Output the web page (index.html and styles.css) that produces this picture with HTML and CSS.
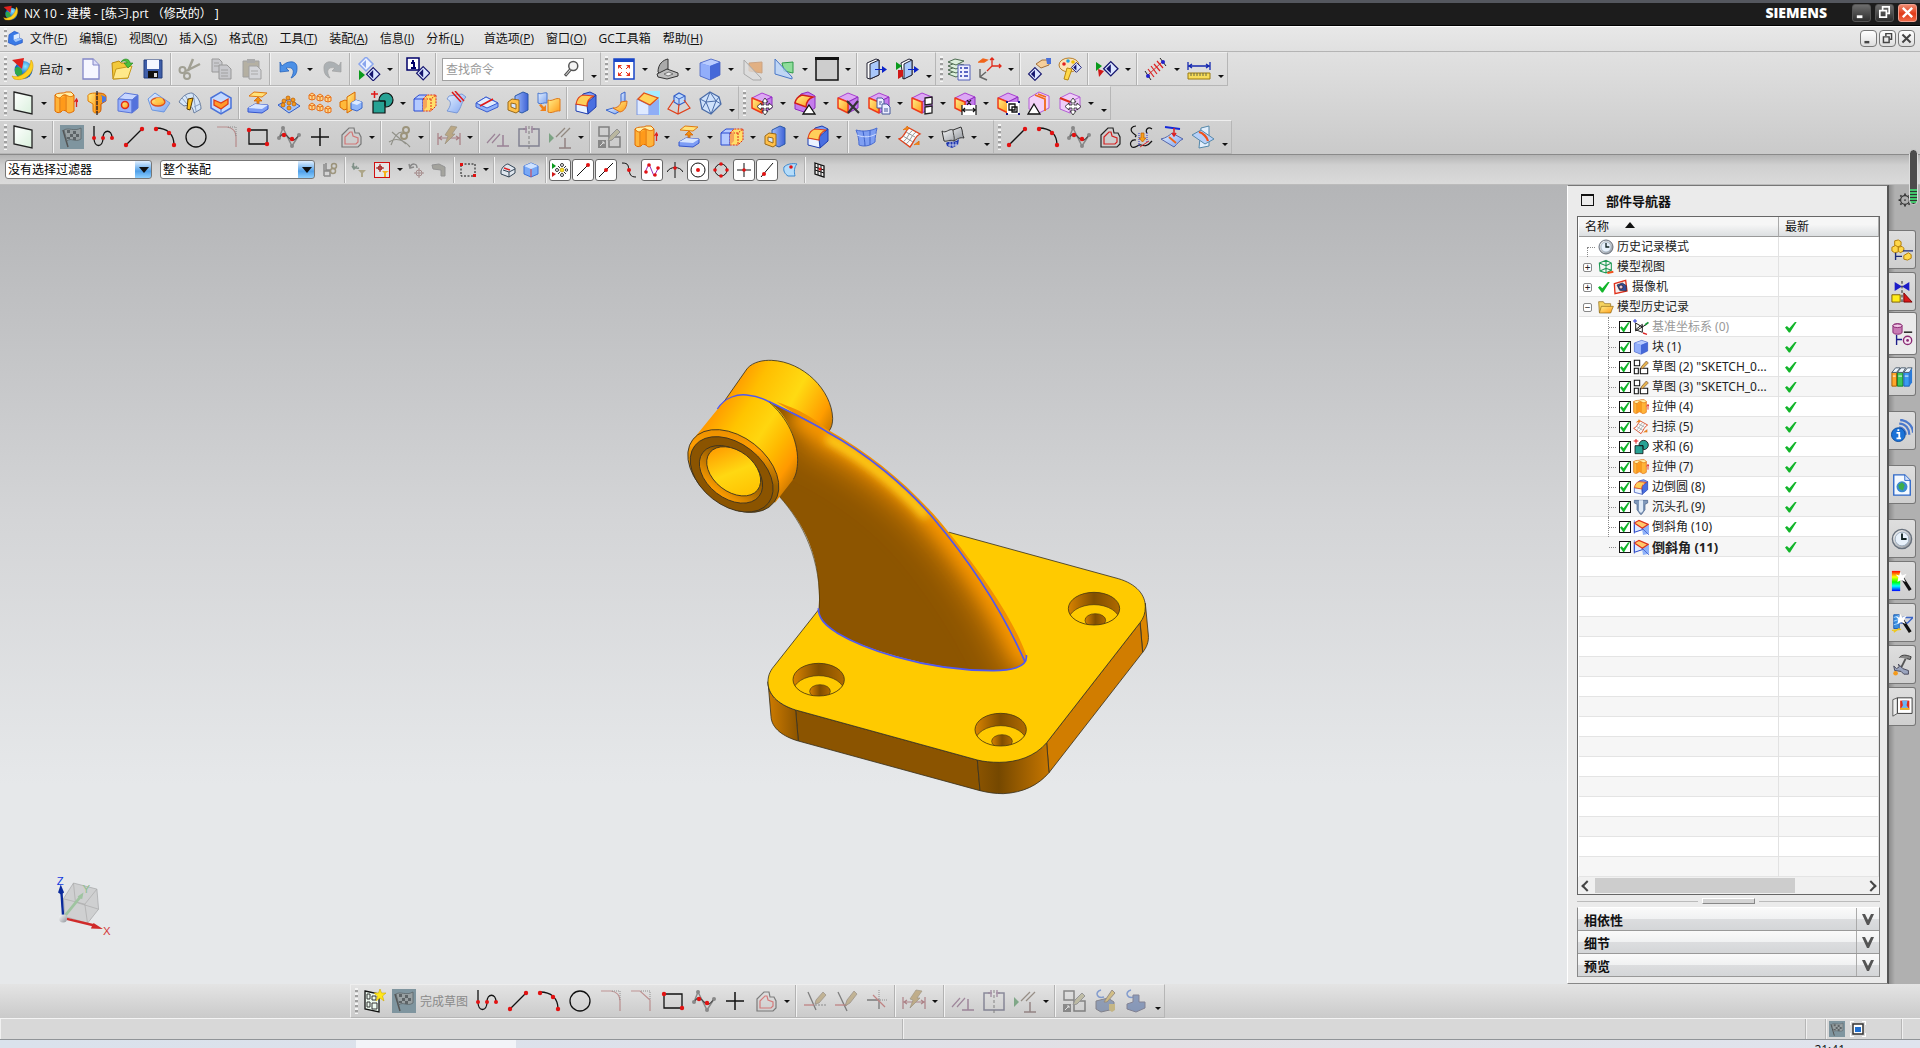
FILE: index.html
```html
<!DOCTYPE html>
<html lang="zh-CN">
<head>
    <meta charset="utf-8">
    <title>NX 10 - 建模 - [练习.prt （修改的） ]</title>
    <link rel="stylesheet" href="styles.css">
</head>
<body>
    <!-- icon library -->
    <svg class="library" aria-hidden="true">
        <defs>
            <linearGradient id="blue" x1="0" y1="0" x2="1" y2="1"><stop offset="0" stop-color="#e4f0ff"/><stop offset="1" stop-color="#7fa4f0"/></linearGradient>
            <linearGradient id="deep" x1="0" y1="0" x2="1" y2="0"><stop offset="0" stop-color="#9fbcfa"/><stop offset="1" stop-color="#3e62d6"/></linearGradient>
            <linearGradient id="gold" x1="0" y1="0" x2="1" y2="1"><stop offset="0" stop-color="#fff08a"/><stop offset="1" stop-color="#ff9a1a"/></linearGradient>
            <linearGradient id="mint" x1="0" y1="0" x2="1" y2="1"><stop offset="0" stop-color="#ffffff"/><stop offset="1" stop-color="#d9f0dc"/></linearGradient>
            <linearGradient id="steel" x1="0" y1="0" x2="1" y2="1"><stop offset="0" stop-color="#ffffff"/><stop offset="1" stop-color="#8d9299"/></linearGradient>
            <linearGradient id="rainbow" x1="0" y1="0" x2="0" y2="1"><stop offset="0" stop-color="#f00"/><stop offset=".3" stop-color="#ff0"/><stop offset=".55" stop-color="#0f0"/><stop offset=".75" stop-color="#0ff"/><stop offset="1" stop-color="#00f"/></linearGradient>
            <radialGradient id="globe" cx=".6" cy=".3"><stop offset="0" stop-color="#8fe8ff"/><stop offset="1" stop-color="#0a62c8"/></radialGradient>
            <g id="pcube" stroke-linejoin="round">
                <path d="M2 7 12 2 22 6 12 11Z" fill="#dca8f4" stroke="#a93fd0"/>
                <path d="M12 11 22 6V17L12 22Z" fill="#c47cec" stroke="#8e2cc0"/>
                <path d="M2 7 12 11V22L2 17Z" fill="url(#gold)" stroke="#ee3a1a" stroke-width="1.500"/>
            </g>
            <g id="move4">
                <path d="M15 7 18 11H16V14H19V12L23 15.500 19 19V17H16V20H18L15 24 12 20H14V17H11V19L7 15.500 11 12V14H14V11H12Z" fill="#fff" stroke="#222" stroke-width=".8"/>
            </g>
            <g id="diamond"><path d="M12 1 23 12 12 23 1 12Z" fill="#dce6ff" stroke="#14146e" stroke-width="2"/><path d="M12 5V19L5 12Z" fill="#14146e"/></g>
            <g id="wand"><path d="M12 8 21 22" stroke="#111" stroke-width="3.500"/><path d="M10 2 12 6 17 4 14 9 16 13 11 11 7 13 8 8 5 5 9 6Z" fill="#fff"/></g>
        </defs>

        <symbol id="nx" viewBox="0 0 24 24"><circle cx="12.500" cy="13" r="9" fill="url(#globe)"/><path d="M4 11C8 8 12 12 11 17 9 21 6 19 4 16Z" fill="#2fa84a"/><path d="M1 19C8 22 19 15 20 3 26 10 18 26 3 22Z" fill="#ffd21f" stroke="#d99a00" stroke-width=".6"/><path d="M1 3 13 1 11 12Z" fill="#e0201c"/></symbol>
        <symbol id="part" viewBox="0 0 24 24"><path d="M3 7 11 2 18 5V12L23 14V19L12 23 2 19Z" fill="#3a7ae6" stroke="#1b4fc0"/><path d="M10 8 18 5V12L10 15Z" fill="#dcebff"/><path d="M10 15 18 12 23 14 13 18Z" fill="#a4c8fa"/></symbol>
        <symbol id="new" viewBox="0 0 24 24"><path d="M4 2H14L20 8V22H4Z" fill="#f6f6ff" stroke="#8286c8" stroke-width="1.300"/><path d="M14 2V8H20" fill="#dcdcf8" stroke="#8286c8"/></symbol>
        <symbol id="open" viewBox="0 0 24 24"><path d="M2 6 9 4 11 6H18V21L3 22Z" fill="#f3c93a" stroke="#b98a10"/><path d="M6 12 22 9 18 21 3 22Z" fill="#ffe98a" stroke="#c79a1a"/><path d="M11 5C14 0 20 2 20 6H23L18 11 14 6H17C17 4 14 3 11 5Z" fill="#4cbf3c" stroke="#20801c" stroke-width=".6"/></symbol>
        <symbol id="save" viewBox="0 0 24 24"><path d="M3 3H21V21H3Z" fill="#3f5ea8" stroke="#223c7c"/><path d="M6 3H18V12H6Z" fill="#f6f8ff"/><path d="M7 14H17V21H7Z" fill="#111"/><path d="M13 16H16V20H13Z" fill="#ddd"/></symbol>
        <symbol id="cut" viewBox="0 0 24 24"><path d="M15 2 10 14M22 7 8 14" stroke="#66644c" stroke-width="2.500"/><g fill="none" stroke="#66644c" stroke-width="2"><circle cx="4.500" cy="13" r="3"/><circle cx="9" cy="19" r="3"/></g></symbol>
        <symbol id="copy" viewBox="0 0 24 24"><g fill="#b4b5bd" stroke="#555"><path d="M3 2H10L13 5V15H3Z"/><path d="M10 8H18L22 12V22H10Z"/></g><path d="M5 6H10M5 9H10M12 13H19M12 16H19M12 19H19" stroke="#666"/></symbol>
        <symbol id="paste" viewBox="0 0 24 24"><path d="M3 4H19V20H3Z" fill="#8d8468" stroke="#666"/><path d="M7 2H15V6H7Z" fill="#777"/><path d="M9 9H17L21 13V22H9Z" fill="#ccced6" stroke="#666"/><path d="M11 14H18M11 17H18" stroke="#777"/></symbol>
        <symbol id="undo" viewBox="0 0 24 24"><path d="M3 5 5 9C11 3 21 3 20 12 20 17 17 20 14 21 18 15 17 9 9 11L12 14 3 15Z" fill="#4c90e6" stroke="#1d5cb8" stroke-width=".7"/></symbol>
        <symbol id="redo" viewBox="0 0 24 24"><path d="M21 5 19 9C13 3 3 3 4 12 4 17 7 20 10 21 6 15 7 9 15 11L12 14 21 15Z" fill="#7a848a" stroke="#666" stroke-width=".7"/></symbol>
        <symbol id="repeat" viewBox="0 0 24 24"><path d="M9 0 16 7 9 14 2 7Z" fill="#edf3ff" stroke="#8aa6ee" stroke-width="1.500"/><path d="M9 3V11L5 7Z" fill="#8aa6ee"/><path d="M2 13 8 18 2 23Z" fill="#0a9a1c"/><g transform="translate(9 10) scale(.6)"><use href="#diamond"/></g></symbol>
        <symbol id="info" viewBox="0 0 24 24"><path d="M1 1H13V13H1Z" fill="#fff" stroke="#00006a" stroke-width="1.500"/><path d="M7 3V5M5 6H8V11M5 11H10" stroke="#00006a" stroke-width="2" fill="none"/><g transform="translate(10 9) scale(.6)"><use href="#diamond"/></g></symbol>
        <symbol id="search" viewBox="0 0 24 24"><circle cx="15" cy="8" r="6" fill="#f4f4f4" stroke="#555" stroke-width="2"/><path d="M11 13 4 21" stroke="#555" stroke-width="4"/><path d="M11 13 5 20" stroke="#eee" stroke-width="1.300"/></symbol>
        <symbol id="fit" viewBox="0 0 24 24"><path d="M2 2H22V22H2Z" fill="#fff" stroke="#1846c8" stroke-width="1.500"/><path d="M2 2H22V5H2Z" fill="#1846c8"/><path d="M6 8H10L6 12ZM18 8V12L14 8ZM6 19V15L10 19ZM18 19H14L18 15Z" fill="#e8321a"/><path d="M7 9 10 12M17 9 14 12M7 18 10 15M17 18 14 15" stroke="#e8321a"/></symbol>
        <symbol id="orient" viewBox="0 0 24 24"><path d="M3 15C3 7 8 3 13 2V12L5 17Z" fill="#aaa" stroke="#333"/><path d="M2 17 12 12 23 16V19L12 22 3 20Z" fill="#bdbdbd" stroke="#333"/><path d="M9 17 14 15 18 17 13 19Z" fill="#eee" stroke="#555" stroke-width=".7"/></symbol>
        <symbol id="cube" viewBox="0 0 24 24"><path d="M2 6 13 2 22 5V18L12 23 2 19Z" fill="#5c80ea"/><path d="M2 6 13 2 22 5 12 9Z" fill="#b9ccff"/><path d="M2 6 12 9V23L2 19Z" fill="#92aefa"/><path d="M12 9 22 5V18L12 23Z" fill="#4568d8"/><path d="M2 6 13 2 22 5V18L12 23 2 19Z" fill="none" stroke="#4a63c0" stroke-width=".8"/></symbol>
        <symbol id="clip" viewBox="0 0 24 24"><path d="M8 6 21 5V16L8 14Z" fill="#e6842a" stroke="#b96b2a"/><path d="M3 3 20 21V23H12L3 17Z" fill="#ddd" fill-opacity=".7" stroke="#777"/></symbol>
        <symbol id="clip2" viewBox="0 0 24 24"><path d="M10 6 21 5V16L12 14Z" fill="#8fdd9a" stroke="#2f9a48"/><path d="M3 2 20 20V22L3 17Z" fill="#b9d4fa" fill-opacity=".8" stroke="#4a78c8"/></symbol>
        <symbol id="swatch" viewBox="0 0 24 24"><path d="M1 1H23V23H1Z" fill="#cdcdcd" stroke="#111" stroke-width="1.500"/><path d="M0 0H24V3H0Z" fill="#111"/></symbol>
        <symbol id="door" viewBox="0 0 24 24"><path d="M3 6 12 2 15 3V18L6 22 3 21Z" fill="#fff" stroke="#223"/><path d="M6 7 15 3V18L6 22Z" fill="#a9c8fa" stroke="#223"/><path d="M11 12H18V9L23 12.500 18 16V13H11Z" fill="#0a22c8"/></symbol>
        <symbol id="doorrun" viewBox="0 0 24 24"><path d="M6 6 14 2 17 3V18L8 22Z" fill="#fff" stroke="#223"/><path d="M9 7 17 3V18L9 22Z" fill="#a9c8fa" stroke="#223"/><path d="M13 12H19V9L24 12.500 19 16V13H13Z" fill="#0a22c8"/><path d="M1 5 7 9 1 13Z" fill="#0a9a1c"/><path d="M3 13H8V19L3 22Z" fill="#d01818"/></symbol>
        <symbol id="layers" viewBox="0 0 24 24"><g fill="#dcefdc" stroke="#4c6a50"><path d="M1 17 8 14 17 16 9 20Z"/><path d="M1 13 8 10 17 12 9 16Z"/><path d="M1 9 8 6 17 8 9 12Z"/><path d="M1 5 8 2 17 4 9 8Z"/></g><path d="M11 8H23V23H11Z" fill="#eef" stroke="#5560b8"/><path d="M13 11H15M13 15H15M13 19H15M17 11H21M17 15H21M17 19H21" stroke="#2a38b0" stroke-width="1.500"/></symbol>
        <symbol id="csys" viewBox="0 0 24 24"><path d="M14 1V9M14 9H23M14 9 9 14M12 3 14 1 16 3M21 7 23 9 21 11" stroke="#e02a1a" fill="none" stroke-width="1.300"/><path d="M1 5 5 2 9 3 6 5Z" fill="#f0641a" stroke="#f0641a" stroke-width="1.500"/><path d="M2 12V20L9 23M2 20 8 15" stroke="#666" fill="none" stroke-width="1.500"/></symbol>
        <symbol id="handview" viewBox="0 0 24 24"><path d="M9 7 15 3H22V8L14 11Z" fill="#f5cf9c" stroke="#a3703a"/><path d="M19 1H24V7H20Z" fill="#4a70d8"/><g transform="translate(1 10) scale(.58)"><use href="#diamond"/></g></symbol>
        <symbol id="palette" viewBox="0 0 24 24"><ellipse cx="11" cy="8" rx="10" ry="7" fill="#fbe3b8" stroke="#b8802c"/><circle cx="6" cy="7" r="1.800" fill="#e02020"/><circle cx="10" cy="4" r="1.800" fill="#22a0e0"/><circle cx="15" cy="5" r="1.800" fill="#f0c000"/><path d="M9 11 14 12 10 23 6 22Z" fill="#ffd84a" stroke="#b98a10"/><g transform="translate(13 5) scale(.45)"><use href="#diamond"/></g></symbol>
        <symbol id="showhide" viewBox="0 0 24 24"><path d="M1 5 7 9 1 14Z" fill="#0a9a1c"/><path d="M3 12 9 14 4 20Z" fill="#d01818"/><g transform="translate(8 4) scale(.65)"><use href="#diamond"/></g></symbol>
        <symbol id="distance" viewBox="0 0 24 24"><path d="M4 18 18 5" stroke="#c33"/><path d="M4 12 10 20M7 9 13 17M10 7 16 14M13 4 19 11" stroke="#d22" stroke-width="1.200"/><path d="M1 14 7 23M16 1 22 9" stroke="#222"/><circle cx="4" cy="19" r="2" fill="#22c"/><circle cx="19" cy="5" r="2" fill="#22c"/></symbol>
        <symbol id="ruler" viewBox="0 0 24 24"><path d="M1 5V13M23 5V13M2 9H22M5 7 2 9 5 11M19 7 22 9 19 11" stroke="#1428b0" stroke-width="1.300" fill="none"/><path d="M1 16H23V22H1Z" fill="#f7dc5a" stroke="#9a7a10"/><path d="M4 16V19M7 16V19M10 16V19M13 16V19M16 16V19M19 16V19" stroke="#664"/></symbol>

        <symbol id="plane" viewBox="0 0 24 24"><path d="M3 1 21 5V23L3 19Z" fill="url(#mint)" stroke="#222" stroke-width="1.300"/></symbol>
        <symbol id="extrude" viewBox="0 0 24 24"><path d="M1 4V20C3 22 5 22 7 21L9 19 12 20C14 23 17 22 20 20V4Z" fill="#ffb43a" stroke="#e06a00"/><path d="M1 4C4 1 9 3 12 1L17 1 20 4C17 7 14 5 12 4 9 3 7 6 6 7 4 7 2 6 1 4Z" fill="#fff0a8" stroke="#e06a00"/><path d="M6 7V21M12 5V20" stroke="#e06a00"/><path d="M7 7 11 5V19L7 20Z" fill="#ff9a1a"/><path d="M22.500 16V9M20.500 11 22.500 8 24 11" stroke="#d22" stroke-width="1.300" fill="none"/></symbol>
        <symbol id="revolve" viewBox="0 0 24 24"><path d="M3 6C2 3 6 2 11 2V22C8 22 8 20 8 18V13L3 10Z" fill="url(#gold)" stroke="#e07a00"/><path d="M12 2C18 2 21 3 21 6V10L16 13V18C16 21 14 22 12 22Z" fill="#f59a1a" stroke="#d05a00"/><path d="M16 4 21 6V10L17 12V6Z" fill="#4a78e0"/><path d="M12 0V24" stroke="#222" stroke-width="1.300" stroke-dasharray="4 1"/></symbol>
        <symbol id="block" viewBox="0 0 24 24"><path d="M2 8 9 2 22 4 16 9Z" fill="#c8d6ff" stroke="#5a76d8"/><path d="M2 8 16 9V22L2 20Z" fill="#9ab2fa" stroke="#5a76d8"/><path d="M16 9 22 4V17L16 22Z" fill="#5472dc" stroke="#5a76d8"/><circle cx="9" cy="14" r="3.500" fill="url(#gold)" stroke="#e02a1a" stroke-width="1.500"/></symbol>
        <symbol id="emboss" viewBox="0 0 24 24"><path d="M1 8 8 2 23 12 17 21 5 19Z" fill="url(#blue)" stroke="#6a96e0"/><ellipse cx="11" cy="11" rx="7" ry="4" fill="url(#gold)" stroke="#e0501a" stroke-width="1.300"/><ellipse cx="12" cy="9" rx="4" ry="2.500" fill="#ffc94a"/></symbol>
        <symbol id="sweep" viewBox="0 0 24 24"><path d="M1 11C5 4 10 2 14 2 20 5 23 12 23 18L16 22C15 16 12 13 6 15Z" fill="#d6e6f8" stroke="#6a7ea0"/><path d="M7 4 12 12M15 2 18 20M9 13 4 7M16 16 22 13" stroke="#8a9ebe"/><path d="M10 8 15 7 12 19 9 18Z" fill="#ffc21a" stroke="#5a3a00"/></symbol>
        <symbol id="shell" viewBox="0 0 24 24"><path d="M2 7 12 1 22 7V17L12 23 2 17Z" fill="#c4daff" stroke="#4a72d8" stroke-width="1.500"/><path d="M5 9 12 12 19 8V13L12 18 5 14Z" fill="#ff9a2a" stroke="#e03a1a" stroke-width="1.300"/><path d="M12 18V22" stroke="#4a72d8"/></symbol>
        <symbol id="pad" viewBox="0 0 24 24"><path d="M3 5 8 1 21 2 16 6Z" fill="#ffe27a" stroke="#e07a10"/><path d="M12 6 16 10H13V14H11V10H8Z" fill="#f09010" stroke="#d05a00" stroke-width=".7"/><path d="M2 17 9 13 22 14V18L16 22 2 21Z" fill="#7d9df5" stroke="#3556cc"/><path d="M2 17 9 13 22 14 16 18Z" fill="#d9e6ff"/></symbol>
        <symbol id="bumps" viewBox="0 0 24 24"><path d="M1 14 12 8 23 15 12 22Z" fill="#a4c4f8" stroke="#2f5cc8"/><g fill="#f79a1a" stroke="#b85c00" stroke-width=".7"><circle cx="11" cy="7" r="2"/><circle cx="16" cy="9" r="2"/><circle cx="7" cy="10" r="2"/><circle cx="12" cy="12" r="2"/><circle cx="17" cy="13" r="2"/><circle cx="6" cy="14" r="2"/><circle cx="12" cy="17" r="2"/></g></symbol>
        <symbol id="array" viewBox="0 0 24 24"><g fill="#ffd88a" stroke="#e8701a"><path d="M1 4 4 2 7 4V8L4 9 1 8Z"/><path d="M9 5 12 3 15 5V9L12 10 9 9Z"/><path d="M17 6 20 4 23 6V10L20 11 17 10Z"/><path d="M1 14 4 12 7 14V18L4 19 1 18Z"/><path d="M9 15 12 13 15 15V19L12 20 9 19Z"/><path d="M17 17 20 15 23 17V21L20 22 17 21Z"/><path d="M1 4 4 5V9M4 5 7 4M9 5 12 6V10M12 6 15 5M17 6 20 7V11M20 7 23 6M1 14 4 15V19M4 15 7 14M9 15 12 16V20M12 16 15 15M17 17 20 18V22M20 18 23 17" fill="none"/></g></symbol>
        <symbol id="mirror" viewBox="0 0 24 24"><path d="M1 11 6 9 11 11V17L5 19 1 16Z" fill="#ffb93a" stroke="#d86a00"/><path d="M8 6 16 1V17L8 22Z" fill="url(#gold)" stroke="#d86a00"/><path d="M12 12 17 9 23 11V17L18 20 12 18Z" fill="#8fb6f8" stroke="#3a66cc"/><path d="M12 12 17 9 23 11 18 14Z" fill="#dcebff"/></symbol>
        <symbol id="unite" viewBox="0 0 24 24"><path d="M1 3H8M4.500 0V7" stroke="#e01818" stroke-width="1.500"/><circle cx="16" cy="9" r="7" fill="#27a294" stroke="#111" stroke-width="1.200"/><path d="M3 10H15V22H3Z" fill="#27a294" stroke="#111" stroke-width="1.200"/><path d="M10 10H15V15" fill="none" stroke="#111"/></symbol>
        <symbol id="trim" viewBox="0 0 24 24"><path d="M1 8 6 4H14V16L10 20H1Z" fill="#b4caff" stroke="#2a4ad0"/><path d="M10 8 14 4H23V15L18 20H10Z" fill="#ffdf6a" stroke="#e02a1a" stroke-dasharray="2 1"/><path d="M18 8V20M10 8H18L23 4" fill="none" stroke="#e02a1a" stroke-dasharray="2 1"/><path d="M1 8H10V20" fill="none" stroke="#2a4ad0"/><path d="M10 9C12 9 13 7 14 5V16L10 20Z" fill="#f7a45a"/></symbol>
        <symbol id="tsheet" viewBox="0 0 24 24"><path d="M5 5 18 3 22 6C17 11 18 16 13 22L3 20C7 15 8 10 3 8Z" fill="url(#blue)" stroke="#6a8cd0" stroke-width=".8"/><path d="M8 1 17 11M11 0 20 10" stroke="#e01818" stroke-width="1.500"/></symbol>
        <symbol id="split" viewBox="0 0 24 24"><path d="M1 12 11 6 23 12V16L12 21 1 16Z" fill="#8fb0f8" stroke="#3a5cd0"/><path d="M1 12 11 6 23 12 12 17Z" fill="#e0ecff" stroke="#3a5cd0"/><path d="M5 15 18 8" stroke="#e01818" stroke-width="1.800"/></symbol>
        <symbol id="combine" viewBox="0 0 24 24"><path d="M9 5 17 1 22 3V19L16 22 9 19Z" fill="url(#deep)" stroke="#2a58a8"/><path d="M2 11 6 8 13 9V20L10 22 2 19Z" fill="#ffc04a" stroke="#9a6a1a"/><path d="M5 12 10 13V18L5 16Z" fill="#d5e6ff" stroke="#9a6a1a"/></symbol>
        <symbol id="sew" viewBox="0 0 24 24"><path d="M1 2C4 4 7 1 10 2V12C7 11 4 14 1 12Z" fill="url(#blue)" stroke="#4a78d0"/><path d="M11 9C15 11 19 6 23 8V20C19 19 15 23 11 21Z" fill="url(#gold)" stroke="#e07a1a"/><path d="M2 14 4 13 7 16 9 14V20H3L5 18Z" fill="#f0801a"/></symbol>
        <symbol id="fillet" viewBox="0 0 24 24"><path d="M13 12 22 4V16L14 23Z" fill="#4a6fe0" stroke="#1c3cb0"/><path d="M2 13 13 14 14 23 2 20Z" fill="#eaf2ff" stroke="#1c3cb0"/><path d="M9 3 16 1 22 4 19 6 8 5Z" fill="#7d9df5" stroke="#1c3cb0"/><path d="M2 13C3 8 5 5 9 4L20 5C15 7 13 10 13 15Z" fill="#ffcf5a" stroke="#e0401a" stroke-width="1.200"/></symbol>
        <symbol id="blend" viewBox="0 0 24 24"><path d="M16 3 20 1V12L16 14Z" fill="url(#blue)" stroke="#3a66cc"/><path d="M1 19 8 17 15 20 10 23Z" fill="url(#blue)" stroke="#3a66cc"/><path d="M16 11C15 15 12 17 8 17L15 21C20 20 22 15 22 10Z" fill="url(#gold)" stroke="#e0701a"/></symbol>
        <symbol id="chamfer" viewBox="0 0 24 24"><path d="M9 0H24V24H9Z" fill="#a6ecff"/><path d="M1 8 13 14V24H1Z" fill="#dfeaff" stroke="#7a96e0"/><path d="M13 14 23 8V24H13Z" fill="#8faef6"/><path d="M2 8 8 2 22 7 14 14Z" fill="#ffd45a" stroke="#e0501a" stroke-width="1.300"/></symbol>
        <symbol id="draft" viewBox="0 0 24 24"><path d="M7 5 12 2 18 5V11L12 14 7 11Z" fill="#bcd8fb" stroke="#3560c8" stroke-width="1.200"/><path d="M7 5 12 8 18 5M12 8V14" fill="none" stroke="#3560c8"/><path d="M7 9 1 18 11 23 23 17 17 9M12 13 11 23" fill="none" stroke="#e0401a" stroke-width="1.200"/></symbol>
        <symbol id="gem" viewBox="0 0 24 24"><path d="M12 1 21 6 23 13 13 23 4 18 2 8Z" fill="#cfe2fb" stroke="#4a6ca8" stroke-width="1.200"/><path d="M12 1 8 11 2 8M8 11 18 10 21 6M12 1 18 10 23 13M8 11 4 18M8 11 13 23 18 10" fill="none" stroke="#4a6ca8"/></symbol>

        <symbol id="face-move" viewBox="0 0 24 24"><use href="#pcube"/><use href="#move4"/></symbol>
        <symbol id="face-resize" viewBox="0 0 24 24"><path d="M8 3 15 1 22 5V17L14 22 2 18V11Z" fill="#c47cec" stroke="#8e2cc0"/><path d="M2 12C3 7 6 5 9 4L20 6C15 8 13 11 13 16Z" fill="url(#gold)" stroke="#d0201a" stroke-width="1.500"/><path d="M16 14 22 23H10Z" fill="#fff" stroke="#111" stroke-width="1.300"/></symbol>
        <symbol id="face-delete" viewBox="0 0 24 24"><use href="#pcube"/><path d="M11 10 23 22M22 10 12 22" stroke="#333" stroke-width="2.200"/></symbol>
        <symbol id="face-copy" viewBox="0 0 24 24"><use href="#pcube"/><g fill="#eef" stroke="#44589a"><path d="M10 7H15L17 9V17H10Z"/><path d="M15 13H20L23 16V23H15Z"/></g><path d="M12 11H15M12 13H14M17 18H21M17 20H21" stroke="#44589a"/></symbol>
        <symbol id="face-pattern" viewBox="0 0 24 24"><use href="#pcube"/><g fill="#fff" stroke="#222" stroke-width="1.300"><path d="M15 7 22 6V13L15 14Z"/><path d="M15 16 22 15V22L15 23Z"/></g></symbol>
        <symbol id="face-dim" viewBox="0 0 24 24"><use href="#pcube"/><path d="M9 14H23V24H9Z" fill="#fff"/><path d="M9 14V24M23 14V24M10 19H22M12 17 10 19 12 21M20 17 22 19 20 21M14 9 18 14M18 9 14 14" stroke="#111" stroke-width="1.200" fill="none"/></symbol>
        <symbol id="face-group" viewBox="0 0 24 24"><use href="#pcube"/><path d="M11 11H23V23H11Z" fill="#fff"/><path d="M10 10H12V12H10ZM22 10H24V12H22ZM10 22H12V24H10ZM22 22H24V24H22Z" fill="#14147e"/><path d="M13 13H19V19H13ZM16 16H21V21H16Z" fill="none" stroke="#111" stroke-width="1.300"/></symbol>
        <symbol id="face-shell" viewBox="0 0 24 24"><path d="M2 7 12 1 22 5V17L12 22 2 18Z" fill="#f3d2f8" stroke="#b35cd6"/><path d="M8 4 18 8V20M11 3 19 6" fill="none" stroke="#f06a1a" stroke-width="1.800"/><path d="M7 13 13 23H1Z" fill="#fff" stroke="#111" stroke-width="1.300"/></symbol>
        <symbol id="face-edge" viewBox="0 0 24 24"><path d="M2 7 12 2 22 6V17L12 22 2 18Z" fill="#efcdf8" stroke="#b35cd6"/><path d="M12 11V22M12 11 22 6" stroke="#b35cd6"/><path d="M2 7 12 11" stroke="#e02a1a" stroke-width="2"/><use href="#move4"/></symbol>

        <symbol id="flag" viewBox="0 0 24 24"><path d="M0 0H24V24H0Z" fill="#7f959f"/><path d="M3 5 8 22" stroke="#555" stroke-width="1.500"/><path d="M4 5C9 2 14 7 21 3V14C15 18 11 12 7 16Z" fill="#98a0a2" stroke="#5a6468" stroke-width=".8"/><path d="M7 5H10V8H7ZM13 6H16V9H13ZM10 9H13V12H10ZM16 9H19V12H16ZM13 12H16V15H13ZM7 12H10V14H7Z" fill="#5d6467"/></symbol>
        <symbol id="profile" viewBox="0 0 24 24"><path d="M3 1V13C3 23 12 23 12 13 12 4 21 4 21 13" fill="none" stroke="#111" stroke-width="1.300"/><g fill="#e21212"><circle cx="3" cy="13" r="2"/><circle cx="12" cy="13" r="2"/><circle cx="21" cy="13" r="2"/></g></symbol>
        <symbol id="line" viewBox="0 0 24 24"><path d="M4 20 20 4" stroke="#111" stroke-width="1.300"/><g fill="#e21212"><circle cx="4" cy="20" r="2.200"/><circle cx="20" cy="4" r="2.200"/></g></symbol>
        <symbol id="arc" viewBox="0 0 24 24"><path d="M3 3C14 3 21 9 21 20" fill="none" stroke="#111" stroke-width="1.300"/><g fill="#e21212"><circle cx="3" cy="4" r="2.200"/><circle cx="16" cy="8" r="2.200"/><circle cx="21" cy="20" r="2.200"/></g></symbol>
        <symbol id="circle" viewBox="0 0 24 24"><circle cx="12" cy="12" r="10" fill="none" stroke="#111" stroke-width="1.300"/></symbol>
        <symbol id="corner" viewBox="0 0 24 24"><path d="M2 2H12C18 3 21 7 21 12V22" fill="none" stroke="#a04a4a" stroke-width="1.200"/><path d="M13 2H21V11" fill="none" stroke="#444" stroke-dasharray="1 1"/></symbol>
        <symbol id="bevel" viewBox="0 0 24 24"><path d="M1 2H10L20 11V22" fill="none" stroke="#a04a4a" stroke-width="1.200"/><path d="M11 2H20V10" fill="none" stroke="#444" stroke-dasharray="1 1"/></symbol>
        <symbol id="rect" viewBox="0 0 24 24"><path d="M3 5H21V19H3Z" fill="none" stroke="#111" stroke-width="1.300"/><circle cx="3" cy="5" r="2.200" fill="#e21212"/><circle cx="21" cy="19" r="2.200" fill="#e21212"/></symbol>
        <symbol id="spline" viewBox="0 0 24 24"><path d="M2 13 6 3 15 21 22 10" stroke="#888" fill="none" stroke-width="1.500"/><path d="M2 13C7 6 8 9 12 13S18 15 22 10" fill="none" stroke="#444" stroke-width="1.200"/><g fill="#888"><circle cx="6" cy="3" r="2"/><circle cx="2" cy="13" r="2"/><circle cx="15" cy="21" r="2"/><circle cx="22" cy="10" r="2"/></g><circle cx="7" cy="10" r="2.200" fill="#e21212"/><circle cx="15" cy="14" r="2.200" fill="#e21212"/></symbol>
        <symbol id="plus" viewBox="0 0 24 24"><path d="M3 12H21M12 3V21" stroke="#111" stroke-width="1.500"/></symbol>
        <symbol id="offset" viewBox="0 0 24 24"><path d="M3 10 10 3H15L16 8H20L22 12V19L19 22H3Z" fill="none" stroke="#222" stroke-width="1.200"/><path d="M6 12 11 7H13L14 11 19 13V17L17 19H6Z" fill="none" stroke="#d42020" stroke-width="1.200"/></symbol>
        <symbol id="link" viewBox="0 0 24 24"><path d="M3 20C6 12 10 7 14 7M1 17C8 12 16 15 22 22M4 7 18 19" fill="none" stroke="#554" stroke-width="1.200"/><circle cx="16" cy="11" r="3" fill="none" stroke="#6a5a2a" stroke-width="2"/><circle cx="18" cy="5" r="3" fill="none" stroke="#6a5a2a" stroke-width="2"/></symbol>
        <symbol id="dim" viewBox="0 0 24 24"><path d="M1 8V20M23 8V20M2 13H22M5 11 2 13 5 15M19 11 22 13 19 15" fill="none" stroke="#84303a" stroke-width="1.200"/><path d="M14 1 20 2 15 9H18L8 19 11 11 8 10Z" fill="#a5803a" stroke="#665530" stroke-width=".7"/></symbol>
        <symbol id="perp" viewBox="0 0 24 24"><path d="M1 18 9 9M6 18 14 9" stroke="#6a3a62" stroke-width="1.200"/><path d="M17 10V21M11 21H23" stroke="#6a3a62" stroke-width="1.500"/></symbol>
        <symbol id="sym" viewBox="0 0 24 24"><path d="M8 4H2V21H22V4H16" fill="none" stroke="#3a3a5a" stroke-width="1.500"/><path d="M12 1V24" stroke="#333" stroke-dasharray="3 2"/><path d="M9 1V8M15 1V8M6 4H10M14 4H18" stroke="#5a2a5a" stroke-width="1.200"/></symbol>
        <symbol id="auto" viewBox="0 0 24 24"><path d="M1 8 6 13 1 18Z" fill="#2c7a3c"/><path d="M8 12 17 3M13 12 22 3" stroke="#543" stroke-width="1.300"/><path d="M17 13V23M11 23H23" stroke="#5a3a3a" stroke-width="1.500"/></symbol>
        <symbol id="swap" viewBox="0 0 24 24"><path d="M2 2H12V11H2ZM12 12H23V22H12Z" fill="none" stroke="#333" stroke-width="1.500"/><path d="M1 15H9V23H1Z" fill="#444"/><path d="M3 21 7 17M5 17H7V19" stroke="#eee" fill="none"/><path d="M20 4 23 7 15 15 11 16 13 11Z" fill="#a5a072" stroke="#555"/></symbol>
        <symbol id="mesh" viewBox="0 0 24 24"><path d="M1 5C8 7 16 6 22 3 21 8 20 12 20 17 15 21 9 22 4 20 4 15 3 10 1 5Z" fill="#7f9ff2" stroke="#4a6cd0"/><path d="M8 6C9 12 10 17 10 21M15 5C15 11 15 16 15 20" stroke="#3b5fc8" fill="none"/><path d="M2 10C9 13 16 12 21 9" stroke="#cfdcff" fill="none"/></symbol>
        <symbol id="swept" viewBox="0 0 24 24"><path d="M1 14C6 13 7 6 11 3L22 9C17 11 16 17 12 22Z" fill="#fbfbfb" stroke="#e0401a" stroke-width="1.300"/><path d="M5 17C10 14 10 8 15 5M8 19C13 16 13 10 18 7M5 11 15 17M8 7 17 12" stroke="#999" fill="none"/><path d="M5 5 9 2 9 1 11 3 9 5M16 20 20 17 21 16 21 20" fill="#f08a1a" stroke="#e0701a"/></symbol>
        <symbol id="sheet" viewBox="0 0 24 24"><path d="M1 6C5 9 8 3 12 5L20 2C22 6 21 10 23 13 19 12 16 14 13 16 9 14 6 17 3 16Z" fill="url(#steel)" stroke="#333"/><path d="M12 5C12 9 14 12 13 16" stroke="#444" fill="none"/><path d="M5 18C9 15 13 19 18 14L17 20 11 23 6 21Z" fill="#2038b0"/><path d="M9 17V22M12 17V22M15 17V21M7 20H17" stroke="#fff" stroke-width=".7"/></symbol>
        <symbol id="project" viewBox="0 0 24 24"><path d="M7 1C3 1 1 4 3 7S9 10 6 12M23 4C19 1 16 5 18 8M7 15C2 14 0 19 3 22 6 24 9 19 12 20S18 22 23 16" fill="none" stroke="#111" stroke-width="1.200"/><path d="M10 8V21M18 8V18" stroke="#2a2ad0" stroke-dasharray="1 1"/><path d="M12 8H15V13H17L13.500 17 10 13H12Z" fill="#f6a01a" stroke="#c05a00" stroke-width=".7"/><path d="M11 22 20 16" stroke="#d22"/></symbol>
        <symbol id="wrap" viewBox="0 0 24 24"><path d="M1 14C6 13 10 10 12 8L23 14C20 15 17 19 14 22Z" fill="url(#blue)" stroke="#56a"/><path d="M5 2 20 4" stroke="#1428d8" stroke-width="2"/><path d="M14 3V10M12 8 14 11 16 8" stroke="#d22" stroke-width="1.500" fill="none"/><path d="M9 12 16 18" stroke="#f0641a" stroke-width="2"/></symbol>
        <symbol id="cross" viewBox="0 0 24 24"><path d="M10 3 18 1V21L8 23Z" fill="#e2eefc" stroke="#58a"/><path d="M1 10 10 5 23 14 14 19Z" fill="#b6d0f8" stroke="#58a"/><path d="M8 7C12 8 16 12 17 16" stroke="#f0501a" stroke-width="2.200" fill="none"/></symbol>
        <symbol id="sketchnew" viewBox="0 0 24 24"><path d="M3 2 17 5V23L3 20Z" fill="#eefaf0" stroke="#111" stroke-width="1.300"/><path d="M5 5H8V10H5ZM10 7H14V11H10ZM5 13H8V18H5ZM10 14H15V20H10Z" fill="none" stroke="#333"/><path d="M18 0 19.500 4 24 4 20.500 7 22 12 18 9 14 12 15.500 7 12 4 16.500 4Z" fill="#ffe81a" stroke="#d0a800" stroke-width=".6"/></symbol>
        <symbol id="qtrim" viewBox="0 0 24 24"><path d="M5 3 13 21" stroke="#222" stroke-width="1.300"/><path d="M1 16H11" stroke="#a33" stroke-width="1.300"/><path d="M12 16H23" stroke="#444" stroke-dasharray="2 1"/><path d="M20 3 23 6 16 14 12 15 13 11Z" fill="#a88c50" stroke="#543" stroke-width=".7"/></symbol>
        <symbol id="qextend" viewBox="0 0 24 24"><path d="M4 3 13 22" stroke="#222" stroke-width="1.300"/><path d="M1 16H13" stroke="#a33" stroke-width="1.300"/><path d="M20 2 23 5 16 14 11 17 13 11Z" fill="#a88c50" stroke="#543" stroke-width=".7"/></symbol>
        <symbol id="mkcorner" viewBox="0 0 24 24"><path d="M2 11H14V20" stroke="#222" stroke-width="1.300" fill="none"/><path d="M8 6 20 18" stroke="#a33" stroke-width="1.300"/><path d="M14 1V10M15 11H23" stroke="#444" stroke-dasharray="1 1"/></symbol>
        <symbol id="brushes" viewBox="0 0 24 24"><path d="M11 8C4 10 1 3 8 1" fill="none" stroke="#2a5cc0" stroke-width="1.500"/><path d="M3 12 15 9 21 13V20L8 23 3 20Z" fill="#4a6494" stroke="#334"/><path d="M19 1 22 4 14 13H11Z" fill="#c8a030" stroke="#543"/><path d="M16 15H22V21L19 23 16 21Z" fill="#b89a3a"/></symbol>
        <symbol id="stamp" viewBox="0 0 24 24"><path d="M10 8C3 10 0 3 7 1" fill="none" stroke="#2a5cc0" stroke-width="1.500"/><path d="M9 6H15V13H21V19L12 23 3 20V15L9 13Z" fill="#3f5f9e" stroke="#335"/></symbol>

        <symbol id="s-assy" viewBox="0 0 16 16"><path d="M2 2V14M2 9H8V14H2M4 1V8H8" stroke="#444" fill="none" stroke-width="1.500"/><circle cx="12" cy="4" r="2.500" fill="none" stroke="#6a5a2a" stroke-width="1.500"/><circle cx="11" cy="9" r="2.500" fill="none" stroke="#6a5a2a" stroke-width="1.500"/></symbol>
        <symbol id="s-reset" viewBox="0 0 16 16"><path d="M8 6C3 7 1 3 3 1M1 4 3 7 6 4" stroke="#354" fill="none" stroke-width="1.500"/><path d="M7 8H15L12 11V15H10V11Z" fill="#887a40"/></symbol>
        <symbol id="s-snap" viewBox="0 0 16 16"><path d="M0 0H16V16H0Z" fill="#e6e6e6" stroke="#d01010" stroke-width="2"/><path d="M2 6H10M6 2V10" stroke="#a01010"/><circle cx="6" cy="6" r="2" fill="none" stroke="#a01010"/><path d="M8 9H15L12 11V15H10V11Z" fill="#f5b21a"/></symbol>
        <symbol id="s-undo" viewBox="0 0 16 16"><path d="M2 5C4 1 9 1 9 6M1 2 2 6 6 5" stroke="#444" fill="none" stroke-width="1.500"/><circle cx="11" cy="11" r="3" fill="none" stroke="#744"/><path d="M6 11H16M11 6V16" stroke="#744"/></symbol>
        <symbol id="s-tap" viewBox="0 0 16 16"><path d="M1 3 8 2 14 5V14H10V8L2 7Z" fill="#77766a" stroke="#555"/></symbol>
        <symbol id="s-marq" viewBox="0 0 16 16"><path d="M1 2H15V14H1Z" fill="none" stroke="#111" stroke-dasharray="2 1.500"/><path d="M0 1H3V4H0ZM13 12H16V15H13Z" fill="#e01010"/></symbol>
        <symbol id="s-body" viewBox="0 0 16 16"><path d="M1 9C2 5 6 2 8 2L15 6V11L9 15 1 12Z" fill="#dfe6ee" stroke="#345"/><path d="M3 8 9 10 15 7M9 10V15" stroke="#345" fill="none"/><path d="M4 6 10 8" stroke="#d22" stroke-width="1.500"/></symbol>
        <symbol id="s-cube" viewBox="0 0 16 16"><path d="M1 4 8 1 15 4V12L8 15 1 12Z" fill="#78a8f6" stroke="#3a70d8"/><path d="M1 4 8 7 15 4 8 1Z" fill="#cfe2ff"/><path d="M8 7V15" stroke="#e04040"/></symbol>
        <symbol id="s-all" viewBox="0 0 16 16"><path d="M0 1 4 4 0 7Z" fill="#0a9a1c"/><path d="M0 10 4 12 0 15Z" fill="#d01818"/><circle cx="10" cy="8" r="2" fill="#ffe21a" stroke="#a80" stroke-width=".6"/><g fill="none" stroke="#333"><circle cx="10" cy="3" r="1.500"/><circle cx="10" cy="13" r="1.500"/><circle cx="5" cy="8" r="1.500"/><circle cx="14.500" cy="8" r="1.200"/><path d="M6 4 8 6M14 4 12 6M6 12 8 10M14 12 12 10"/></g></symbol>
        <symbol id="s-end" viewBox="0 0 16 16"><path d="M2 14 13 3" stroke="#111"/><circle cx="13" cy="3" r="2" fill="#e21212"/></symbol>
        <symbol id="s-mid" viewBox="0 0 16 16"><path d="M1 15 15 1" stroke="#111"/><circle cx="8" cy="8" r="2" fill="#e21212"/></symbol>
        <symbol id="s-ctrl" viewBox="0 0 16 16"><path d="M1 1C8 1 7 4 8 8S9 15 15 15" fill="none" stroke="#111"/><circle cx="8" cy="8" r="2" fill="#e21212"/></symbol>
        <symbol id="s-pole" viewBox="0 0 16 16"><path d="M1 10 5 2 10 14 15 5" fill="none" stroke="#9a2ab8"/><g fill="#e21212"><circle cx="2" cy="10" r="1.800"/><circle cx="5" cy="3" r="1.800"/><circle cx="11" cy="13" r="1.800"/><circle cx="14" cy="6" r="1.800"/></g></symbol>
        <symbol id="s-inter" viewBox="0 0 16 16"><path d="M8 0V16M0 10C3 4 13 4 16 10" fill="none" stroke="#111"/><circle cx="8" cy="6" r="1.800" fill="#e21212"/></symbol>
        <symbol id="s-center" viewBox="0 0 16 16"><circle cx="8" cy="8" r="7" fill="none" stroke="#111"/><circle cx="8" cy="8" r="2" fill="#e21212"/></symbol>
        <symbol id="s-quad" viewBox="0 0 16 16"><circle cx="8" cy="8" r="6" fill="none" stroke="#111"/><g fill="#e21212"><circle cx="8" cy="2" r="1.800"/><circle cx="8" cy="14" r="1.800"/><circle cx="2" cy="8" r="1.800"/><circle cx="14" cy="8" r="1.800"/></g></symbol>
        <symbol id="s-exist" viewBox="0 0 16 16"><path d="M1 8H15M8 1V15" stroke="#111"/><circle cx="8" cy="8" r="1.800" fill="#e21212"/></symbol>
        <symbol id="s-curve" viewBox="0 0 16 16"><path d="M2 15 14 1" stroke="#111"/><circle cx="5" cy="12" r="2" fill="#e21212"/></symbol>
        <symbol id="s-face" viewBox="0 0 16 16"><path d="M2 5C5 2 10 1 15 2 12 5 12 10 13 14L6 14C3 12 1 9 2 5Z" fill="#b4dcfa" stroke="#3a88d0"/><circle cx="9" cy="5" r="1.800" fill="#e21212"/></symbol>
        <symbol id="s-grid" viewBox="0 0 16 16"><path d="M4 1 13 4V15L4 12Z" fill="#eee" stroke="#111" stroke-width="1.300"/><path d="M7 2V13M10 3V14M4 5 13 8M4 8 13 11" stroke="#111"/><circle cx="9" cy="7" r="1.500" fill="#e21212"/></symbol>

        <symbol id="clock" viewBox="0 0 24 24"><circle cx="12" cy="12" r="10.500" fill="url(#steel)" stroke="#67707c" stroke-width="1.500"/><circle cx="12" cy="12" r="7.500" fill="#e8f1fb" stroke="#9ab"/><path d="M12 6V12H17" stroke="#122" stroke-width="2" fill="none"/></symbol>
        <symbol id="views" viewBox="0 0 24 24"><path d="M2 6 12 2 20 6V17L12 21 3 18ZM2 6 12 10 20 6M12 2V21M3 18 12 14 20 17" fill="none" stroke="#1f9a54" stroke-width="1.600"/><path d="M14 21 23 19" stroke="#f0501a" stroke-width="3"/></symbol>
        <symbol id="camera" viewBox="0 0 24 24"><path d="M2 7 19 2 21 18 3 22Z" fill="#f6eeee" stroke="#e0301a" stroke-width="2"/><path d="M6 9 14 6 20 10V18L10 17Z" fill="#334a9c" stroke="#223"/><circle cx="12" cy="12" r="3" fill="#e8c0d0" stroke="#111"/></symbol>
        <symbol id="folder" viewBox="0 0 24 24"><path d="M1 4H8L10 7H19V20H2Z" fill="#f6d460" stroke="#8a6410"/><path d="M5 11H23L19 21H2Z" fill="url(#gold)" stroke="#8a6410"/></symbol>
        <symbol id="datum" viewBox="0 0 24 24"><path d="M3 0V6M0 3H6" stroke="#2a38d8" stroke-width="1.500"/><path d="M4 6V18L14 12ZM4 16 14 20V8ZM14 12 23 6" fill="none" stroke="#222" stroke-width="1.500"/><path d="M15 21 21 23" stroke="#d22" stroke-width="2"/><path d="M18 9 23 5" stroke="#1a9a3a" stroke-width="2.500"/></symbol>
        <symbol id="sketch" viewBox="0 0 24 24"><path d="M2 2H10V10H2ZM2 14H8V22H2ZM11 14H22V22H11Z" fill="#fff" stroke="#111" stroke-width="1.600"/><path d="M20 3 23 6 15 14 12 15 13 11Z" fill="#e6b44a" stroke="#754"/></symbol>
        <symbol id="hole" viewBox="0 0 24 24"><path d="M2 2H22V6L18 8V16L13 23H11L6 16V8L2 6Z" fill="#7f98ba" stroke="#3f5a85"/><path d="M9 2H15V18L12 21 9 18Z" fill="#dfeaf6"/></symbol>
        <symbol id="t-chamfer" viewBox="0 0 24 24"><path d="M13 12 24 8V22L15 24Z" fill="#8fb2f8"/><path d="M2 8V20L14 16V11" fill="#dfeaff" stroke="#2a48c8" stroke-width="1.500"/><path d="M2 6 9 2 23 8 14 14Z" fill="#ffc86a" stroke="#e0301a" stroke-width="1.800"/><path d="M2 2V22M14 14 24 24" stroke="#2a48c8"/></symbol>
        <symbol id="t-assy" viewBox="0 0 24 24"><g fill="#ffd84a" stroke="#b07800"><path d="M4 2 8 1 11 3V7L7 9 4 7Z"/><path d="M1 9 5 7 8 9V14L4 15 1 13Z"/><path d="M8 9 12 8 14 10V13L10 15 8 13Z"/><path d="M14 18 19 15 22 17V21L18 23 14 22Z"/></g><path d="M13 13H24M5 15V23M5 19H12" stroke="#1b2a78" stroke-width="1.500"/></symbol>
        <symbol id="t-constr" viewBox="0 0 24 24"><path d="M4 1 12 6 4 11ZM20 1 12 6 20 11Z" fill="#1c1cc8"/><path d="M12 0V24" stroke="#111" stroke-dasharray="3 2"/><path d="M1 15H10V23H1Z" fill="#ffec1a" stroke="#7a5a00"/><path d="M14 13V23H23Z" fill="#d81818" stroke="#700"/></symbol>
        <symbol id="t-part" viewBox="0 0 24 24"><path d="M1 3C1 0 11 0 11 3V10C11 13 1 13 1 10Z" fill="#c87ab4" stroke="#86246e"/><ellipse cx="6" cy="3" rx="5" ry="2" fill="#f0c8e6" stroke="#86246e"/><path d="M13 10H22" stroke="#111" stroke-width="1.500"/><path d="M5 13V24M5 18H11" stroke="#1b1b8a" stroke-width="1.500"/><circle cx="17" cy="19" r="4.500" fill="#f5e6f2" stroke="#8a2a74" stroke-width="1.500"/><circle cx="17" cy="19" r="1.500" fill="#8a2a74"/></symbol>
        <symbol id="t-lib" viewBox="0 0 24 24"><path d="M1 7H6V22H1Z" fill="#ffa62a" stroke="#a35a00"/><path d="M7 7H13V22H7Z" fill="#3cc85a" stroke="#0a7a24"/><path d="M14 7H20V22H14Z" fill="#3a9af0" stroke="#1456b0"/><path d="M1 7 5 2H10L6 7ZM7 7 11 2H16L13 7ZM14 7 18 2H23L20 7Z" fill="#eef6ff" stroke="#456"/><path d="M20 7 23 2V18L20 22Z" fill="#2a7ad8"/><path d="M2 11H5M8 11H12M15 11H19" stroke="#fff"/></symbol>
        <symbol id="t-info" viewBox="0 0 24 24"><path d="M9 4C16 4 20 10 20 16M10 0C18 0 24 7 24 14M9 8C13 8 16 12 16 16" fill="none" stroke="#4a78cc" stroke-width="2.500"/><circle cx="8" cy="16" r="7.500" fill="#1a72d8" stroke="#0c4a9a"/><path d="M8 10V12M6 14H9V20M6 20H11" stroke="#fff" stroke-width="2" fill="none"/></symbol>
        <symbol id="t-web" viewBox="0 0 24 24"><path d="M3 1H15L21 7V23H3Z" fill="#f4f9ff" stroke="#2f68c8" stroke-width="1.500"/><path d="M15 1V7H21" fill="#cfe0fa" stroke="#2f68c8"/><circle cx="12" cy="14" r="6" fill="#3c8ad0"/><path d="M8 12 12 9 15 12 13 18 9 16Z" fill="#3cae4a"/></symbol>
        <symbol id="t-color" viewBox="0 0 24 24"><path d="M1 1H10V23H1Z" fill="url(#rainbow)"/><use href="#wand"/></symbol>
        <symbol id="t-screw" viewBox="0 0 24 24"><path d="M3 3H9V18H3Z" fill="#3a8fe0" stroke="#1a5ab0"/><path d="M3 6 9 4M3 10 9 8M3 14 9 12" stroke="#a8d4ff"/><path d="M1 20 11 19M3 22 9 18" stroke="#f0c81a" stroke-width="1.500"/><path d="M12 6H24L18 12H10" fill="none" stroke="#3a64c8" stroke-width="1.500"/><use href="#wand"/></symbol>
        <symbol id="t-tools" viewBox="0 0 24 24"><path d="M9 4C12 0 17 1 22 3L21 6 17 5" fill="#888" stroke="#333"/><path d="M16 5 11 15" stroke="#555" stroke-width="2"/><path d="M3 13 6 16 9 14 8 11 13 16 19 18 19 22 14 22 11 19 4 18Z" fill="#9aa4be" stroke="#445"/><circle cx="5" cy="21" r="2.500" fill="#f59a1a"/></symbol>
        <symbol id="t-role" viewBox="0 0 24 24"><path d="M2 4 7 2V19L2 22Z" fill="#eee" stroke="#555"/><path d="M7 2H23V19H7Z" fill="#fff" stroke="#333"/><path d="M10 5H20V15H10Z" fill="#e02a1a"/><path d="M12 5H18L17 10 20 15H10L13 10Z" fill="#6ab4f4"/><path d="M10 13H20V15H10Z" fill="#f7b21a"/></symbol>
        <symbol id="gear" viewBox="0 0 24 24"><circle cx="12" cy="12" r="7.500" fill="none" stroke="#333" stroke-width="2"/><circle cx="12" cy="12" r="1.500" fill="#333"/><path d="M12 1V4M12 20V23M1 12H4M20 12H23M4 4 6 6M20 4 18 6M4 20 6 18M20 20 18 18" stroke="#333" stroke-width="3"/></symbol>
        <symbol id="fullscreen" viewBox="0 0 16 16"><path d="M0 4V0H4M12 0H16V4M16 12V16H12M4 16H0V12" fill="none" stroke="#fff" stroke-width="2"/><path d="M3 3H13V13H3Z" fill="#fff" stroke="#333" stroke-width="1.500"/><path d="M5 6H11V11H5Z" fill="#1f6fd0"/></symbol>
        <symbol id="min" viewBox="0 0 16 16"><path d="M3 11H9V14H3Z" fill="currentColor"/></symbol>
        <symbol id="restore" viewBox="0 0 16 16"><path d="M3 6H10V13H3Z M6 5V2H13V9H11" fill="none" stroke="currentColor" stroke-width="1.800"/></symbol>
        <symbol id="close" viewBox="0 0 16 16"><path d="M3 3 13 13M13 3 3 13" stroke="currentColor" stroke-width="2.500"/></symbol>
        <symbol id="chev" viewBox="0 0 16 16"><path d="M2 3H5L8 9 11 3H14L9 14H7Z" fill="#555"/></symbol>
    </svg>

    <div class="top-strip"></div>
    <header class="titlebar">
        <svg class="icon16"><use href="#nx"/></svg>
        <span class="window-title">NX 10 - 建模 - [练习.prt （修改的） ]</span>
        <span class="brand">SIEMENS</span>
        <div class="window-buttons">
            <button><svg><use href="#min"/></svg></button>
            <button><svg><use href="#restore"/></svg></button>
            <button class="close"><svg><use href="#close"/></svg></button>
        </div>
    </header>

    <nav class="menubar">
        <i class="grip"></i>
        <svg class="icon16"><use href="#part"/></svg>
        <button>文件(<u>F</u>)</button>
        <button>编辑(<u>E</u>)</button>
        <button>视图(<u>V</u>)</button>
        <button>插入(<u>S</u>)</button>
        <button>格式(<u>R</u>)</button>
        <button>工具(<u>T</u>)</button>
        <button>装配(<u>A</u>)</button>
        <button>信息(<u>I</u>)</button>
        <button class="wide">分析(<u>L</u>)</button>
        <button>首选项(<u>P</u>)</button>
        <button>窗口(<u>O</u>)</button>
        <button>GC工具箱</button>
        <button>帮助(<u>H</u>)</button>
        <div class="child-buttons">
            <button><svg><use href="#min"/></svg></button>
            <button><svg><use href="#restore"/></svg></button>
            <button><svg><use href="#close"/></svg></button>
        </div>
    </nav>

    <div class="toolbars">
        <div class="toolbar-row">
            <div class="toolbar">
                <i class="grip"></i>
                <button class="start"><svg><use href="#nx"/></svg>启动</button><button class="drop"></button>
                <button class="tool"><svg><use href="#new"/></svg></button>
                <button class="tool"><svg><use href="#open"/></svg></button>
                <button class="tool"><svg><use href="#save"/></svg></button>
                <i class="sep"></i>
                <button class="tool off"><svg><use href="#cut"/></svg></button>
                <button class="tool off"><svg><use href="#copy"/></svg></button>
                <button class="tool off"><svg><use href="#paste"/></svg></button>
                <i class="sep"></i>
                <button class="tool"><svg><use href="#undo"/></svg></button><button class="drop"></button>
                <button class="tool off"><svg><use href="#redo"/></svg></button>
                <i class="sep"></i>
                <button class="tool"><svg><use href="#repeat"/></svg></button><button class="drop"></button>
                <i class="sep"></i>
                <button class="tool"><svg><use href="#info"/></svg></button>
                <i class="sep"></i>
                <div class="search">
                    <input type="text" placeholder="查找命令" aria-label="查找命令">
                    <svg><use href="#search"/></svg>
                </div>
                <button class="more"></button>
            </div>
            <div class="toolbar">
                <i class="grip"></i>
                <button class="tool"><svg><use href="#fit"/></svg></button><button class="drop"></button>
                <button class="tool"><svg><use href="#orient"/></svg></button><button class="drop"></button>
                <button class="tool"><svg><use href="#cube"/></svg></button><button class="drop"></button>
                <button class="tool off"><svg><use href="#clip"/></svg></button>
                <button class="tool"><svg><use href="#clip2"/></svg></button><button class="drop"></button>
                <button class="tool"><svg><use href="#swatch"/></svg></button><button class="drop"></button>
                <i class="sep"></i>
                <button class="tool"><svg><use href="#door"/></svg></button>
                <button class="tool"><svg><use href="#doorrun"/></svg></button>
                <button class="more"></button>
            </div>
            <div class="toolbar">
                <i class="grip"></i>
                <button class="tool"><svg><use href="#layers"/></svg></button>
                <button class="tool"><svg><use href="#csys"/></svg></button><button class="drop"></button>
                <i class="sep"></i>
                <button class="tool"><svg><use href="#handview"/></svg></button>
                <button class="tool"><svg><use href="#palette"/></svg></button>
                <i class="sep"></i>
                <button class="tool"><svg><use href="#showhide"/></svg></button><button class="drop"></button>
                <i class="sep"></i>
                <button class="tool"><svg><use href="#distance"/></svg></button><button class="drop"></button>
                <button class="tool"><svg><use href="#ruler"/></svg></button>
                <button class="more"></button>
            </div>
        </div>

        <div class="toolbar-row">
            <div class="toolbar">
                <i class="grip"></i>
                <button class="tool"><svg><use href="#plane"/></svg></button><button class="drop"></button>
                <button class="tool"><svg><use href="#extrude"/></svg></button>
                <button class="tool"><svg><use href="#revolve"/></svg></button>
                <button class="tool"><svg><use href="#block"/></svg></button>
                <button class="tool"><svg><use href="#emboss"/></svg></button>
                <button class="tool"><svg><use href="#sweep"/></svg></button>
                <button class="tool"><svg><use href="#shell"/></svg></button>
                <i class="sep"></i>
                <button class="tool"><svg><use href="#pad"/></svg></button>
                <button class="tool"><svg><use href="#bumps"/></svg></button>
                <button class="tool"><svg><use href="#array"/></svg></button>
                <button class="tool"><svg><use href="#mirror"/></svg></button>
                <button class="tool"><svg><use href="#unite"/></svg></button><button class="drop"></button>
                <button class="tool"><svg><use href="#trim"/></svg></button>
                <button class="tool"><svg><use href="#tsheet"/></svg></button>
                <button class="tool"><svg><use href="#split"/></svg></button>
                <button class="tool"><svg><use href="#combine"/></svg></button>
                <button class="tool"><svg><use href="#sew"/></svg></button>
                <i class="sep"></i>
                <button class="tool"><svg><use href="#fillet"/></svg></button>
                <button class="tool"><svg><use href="#blend"/></svg></button>
                <button class="tool"><svg><use href="#chamfer"/></svg></button>
                <button class="tool"><svg><use href="#draft"/></svg></button>
                <button class="tool"><svg><use href="#gem"/></svg></button>
                <button class="more"></button>
            </div>
            <div class="toolbar">
                <i class="grip"></i>
                <button class="tool"><svg><use href="#face-move"/></svg></button><button class="drop"></button>
                <button class="tool"><svg><use href="#face-resize"/></svg></button><button class="drop"></button>
                <button class="tool"><svg><use href="#face-delete"/></svg></button>
                <button class="tool"><svg><use href="#face-copy"/></svg></button><button class="drop"></button>
                <button class="tool"><svg><use href="#face-pattern"/></svg></button><button class="drop"></button>
                <button class="tool"><svg><use href="#face-dim"/></svg></button><button class="drop"></button>
                <button class="tool"><svg><use href="#face-group"/></svg></button>
                <button class="tool"><svg><use href="#face-shell"/></svg></button>
                <button class="tool"><svg><use href="#face-edge"/></svg></button><button class="drop"></button>
                <button class="more"></button>
            </div>
        </div>

        <div class="toolbar-row">
            <div class="toolbar">
                <i class="grip"></i>
                <button class="tool"><svg><use href="#plane"/></svg></button><button class="drop"></button>
                <i class="sep"></i>
                <button class="tool"><svg><use href="#flag"/></svg></button>
                <button class="tool"><svg><use href="#profile"/></svg></button>
                <button class="tool"><svg><use href="#line"/></svg></button>
                <button class="tool"><svg><use href="#arc"/></svg></button>
                <button class="tool"><svg><use href="#circle"/></svg></button>
                <button class="tool off"><svg><use href="#corner"/></svg></button>
                <button class="tool"><svg><use href="#rect"/></svg></button>
                <button class="tool"><svg><use href="#spline"/></svg></button>
                <button class="tool"><svg><use href="#plus"/></svg></button>
                <button class="tool off"><svg><use href="#offset"/></svg></button><button class="drop"></button>
                <i class="sep"></i>
                <button class="tool off"><svg><use href="#link"/></svg></button><button class="drop"></button>
                <i class="sep"></i>
                <button class="tool off"><svg><use href="#dim"/></svg></button><button class="drop"></button>
                <i class="sep"></i>
                <button class="tool off"><svg><use href="#perp"/></svg></button>
                <button class="tool off"><svg><use href="#sym"/></svg></button>
                <button class="tool off"><svg><use href="#auto"/></svg></button><button class="drop"></button>
                <i class="sep"></i>
                <button class="tool off"><svg><use href="#swap"/></svg></button>
                <i class="sep"></i>
                <button class="tool"><svg><use href="#extrude"/></svg></button><button class="drop"></button>
                <button class="tool"><svg><use href="#pad"/></svg></button><button class="drop"></button>
                <button class="tool"><svg><use href="#trim"/></svg></button><button class="drop"></button>
                <button class="tool"><svg><use href="#combine"/></svg></button><button class="drop"></button>
                <button class="tool"><svg><use href="#fillet"/></svg></button><button class="drop"></button>
                <i class="sep"></i>
                <button class="tool"><svg><use href="#mesh"/></svg></button><button class="drop"></button>
                <button class="tool"><svg><use href="#swept"/></svg></button><button class="drop"></button>
                <button class="tool"><svg><use href="#sheet"/></svg></button><button class="drop"></button>
                <button class="more"></button>
            </div>
            <div class="toolbar">
                <i class="grip"></i>
                <button class="tool"><svg><use href="#line"/></svg></button>
                <button class="tool"><svg><use href="#arc"/></svg></button>
                <button class="tool"><svg><use href="#spline"/></svg></button>
                <button class="tool"><svg><use href="#offset"/></svg></button>
                <button class="tool"><svg><use href="#project"/></svg></button>
                <button class="tool"><svg><use href="#wrap"/></svg></button>
                <button class="tool"><svg><use href="#cross"/></svg></button>
                <button class="more"></button>
            </div>
        </div>
    </div>

    <div class="selection-bar">
        <div class="combo">
            <select aria-label="选择过滤器"><option>没有选择过滤器</option></select>
        </div>
        <div class="combo">
            <select aria-label="选择范围"><option>整个装配</option></select>
        </div>
        <button class="snap off"><svg><use href="#s-assy"/></svg></button>
        <i class="sep"></i>
        <button class="snap off"><svg><use href="#s-reset"/></svg></button>
        <button class="snap"><svg><use href="#s-snap"/></svg></button><button class="drop"></button>
        <button class="snap off"><svg><use href="#s-undo"/></svg></button>
        <button class="snap off"><svg><use href="#s-tap"/></svg></button>
        <i class="sep"></i>
        <button class="snap"><svg><use href="#s-marq"/></svg></button><button class="drop"></button>
        <i class="sep"></i>
        <button class="snap"><svg><use href="#s-body"/></svg></button>
        <button class="snap"><svg><use href="#s-cube"/></svg></button>
        <i class="sep"></i>
        <button class="snap on"><svg><use href="#s-all"/></svg></button>
        <button class="snap on"><svg><use href="#s-end"/></svg></button>
        <button class="snap on"><svg><use href="#s-mid"/></svg></button>
        <button class="snap"><svg><use href="#s-ctrl"/></svg></button>
        <button class="snap on"><svg><use href="#s-pole"/></svg></button>
        <button class="snap"><svg><use href="#s-inter"/></svg></button>
        <button class="snap on"><svg><use href="#s-center"/></svg></button>
        <button class="snap"><svg><use href="#s-quad"/></svg></button>
        <button class="snap on"><svg><use href="#s-exist"/></svg></button>
        <button class="snap on"><svg><use href="#s-curve"/></svg></button>
        <button class="snap"><svg><use href="#s-face"/></svg></button>
        <i class="sep"></i>
        <button class="snap"><svg><use href="#s-grid"/></svg></button>
        <div class="level"></div>
    </div>

    <main class="workspace">
        <section class="graphics">
            <svg class="model" viewBox="0 0 1560 1440">
                <defs>
                    <linearGradient id="cyl" gradientUnits="userSpaceOnUse" x1="140" y1="245" x2="400" y2="420"><stop offset="0" stop-color="#ff9a00"/><stop offset=".25" stop-color="#ffc400"/><stop offset=".5" stop-color="#ffd60f"/><stop offset=".7" stop-color="#ffb800"/><stop offset=".88" stop-color="#ff9900"/><stop offset="1" stop-color="#d07c00"/></linearGradient>
                    <linearGradient id="cylback" gradientUnits="userSpaceOnUse" x1="215" y1="140" x2="500" y2="300"><stop offset="0" stop-color="#ff9a00"/><stop offset=".2" stop-color="#ffbe00"/><stop offset=".55" stop-color="#ffda12"/><stop offset=".85" stop-color="#ff9d00"/><stop offset="1" stop-color="#c87800"/></linearGradient>
                    <linearGradient id="boregrad" gradientUnits="userSpaceOnUse" x1="145" y1="350" x2="300" y2="440"><stop offset="0" stop-color="#ff9c00"/><stop offset=".5" stop-color="#ffd812"/><stop offset="1" stop-color="#ffc000"/></linearGradient>
                    <linearGradient id="ring" x1="0" y1="0" x2="1" y2="1"><stop offset="0" stop-color="#d88400"/><stop offset=".3" stop-color="#ff9d00"/><stop offset=".6" stop-color="#9a6000"/><stop offset="1" stop-color="#6a4200"/></linearGradient>
                    <linearGradient id="chamferring" x1="0" y1="0" x2="0" y2="1"><stop offset="0" stop-color="#6a4200"/><stop offset=".5" stop-color="#b06c00"/><stop offset="1" stop-color="#ff9e00"/></linearGradient>
                    <linearGradient id="leftcorner" x1="0" x2="1"><stop offset="0" stop-color="#cf7c00"/><stop offset="1" stop-color="#8b5400"/></linearGradient>
                    <linearGradient id="frontcorner" x1="0" x2="1"><stop offset="0" stop-color="#8b5400"/><stop offset=".3" stop-color="#754800"/><stop offset="1" stop-color="#c67600"/></linearGradient>
                    <linearGradient id="wall" x1="0" x2="1"><stop offset="0" stop-color="#d98300"/><stop offset=".5" stop-color="#804e00"/><stop offset="1" stop-color="#b06a00"/></linearGradient>
                    <filter id="soft" x="-30%" y="-30%" width="160%" height="160%"><feGaussianBlur stdDeviation="26"/></filter>
                    <filter id="wide" x="-30%" y="-30%" width="160%" height="160%"><feGaussianBlur stdDeviation="50"/></filter>
                    <filter id="glint" x="-30%" y="-30%" width="160%" height="160%"><feGaussianBlur stdDeviation="12"/></filter>
                    <clipPath id="rib"><path d="M335 190C420 225 460 250 500 275 620 340 740 440 820 535 930 665 1030 820 1095 965 1085 985 1040 992 1000 992 800 990 600 920 530 878 490 850 475 830 476 805 485 660 440 560 357 468L413 360Z"/></clipPath>
                    <clipPath id="boreclip"><ellipse rx="77" ry="49"/></clipPath>
                    <g id="cbore">
                        <ellipse rx="77" ry="49" fill="url(#wall)"/>
                        <g clip-path="url(#boreclip)" stroke="#4a3a10" stroke-width="2">
                            <ellipse cy="37" rx="77" ry="49" fill="#ffca00"/>
                            <ellipse cx="4" cy="35" rx="31" ry="20" fill="url(#wall)"/>
                        </g>
                        <ellipse rx="77" ry="49" fill="none" stroke="#4a3a10" stroke-width="2.500"/>
                    </g>
                </defs>
                <g stroke="#3a3220" stroke-width="2.500" stroke-linejoin="round">
                    <path d="M1440 840C1450 825 1456 815 1456 790L1465 885C1467 905 1460 922 1448 937Z" fill="#dd8600"/>
                    <path d="M1160 1208 1440 848 1448 937 1167 1298Z" fill="#d17d00"/>
                    <path d="M407 1110 952 1260 960 1352 415 1203Z" fill="#8b5400"/>
                    <path d="M324 1025C323 1060 350 1092 407 1110L415 1203C370 1190 335 1165 333 1130Z" fill="url(#leftcorner)"/>
                    <path d="M952 1260C1030 1275 1115 1262 1160 1208L1167 1298C1135 1335 1090 1358 1030 1361 1005 1361 985 1358 960 1352Z" fill="url(#frontcorner)"/>
                    <path d="M868 577 1375 716C1430 732 1456 765 1456 800 1456 822 1450 835 1440 848L1160 1208C1125 1250 1070 1267 1018 1267 995 1267 970 1265 952 1260L407 1110C350 1092 323 1060 324 1025 324 1005 332 990 345 975L475 810 700 650Z" fill="#ffca00"/>
                    <path d="M185 195 262 85C280 65 310 60 335 61 430 65 515 150 518 235 518 250 515 262 508 272L480 310 340 230Z" fill="url(#cylback)"/>
                </g>
                <path d="M350 186C440 215 470 245 505 270 640 345 770 455 865 575 980 720 1060 840 1099 945L1095 965 800 560 450 250Z" fill="#f29200"/>
                <g clip-path="url(#rib)">
                    <path d="M300 160H1120V1010H300Z" fill="#8d5500"/>
                    <path d="M440 240C620 320 760 430 850 535 960 665 1060 820 1130 990" fill="none" stroke="#e08600" stroke-width="150" filter="url(#wide)"/>
                    <path d="M400 225C600 320 740 430 830 535 940 665 1030 800 1110 970" fill="none" stroke="#ff9b00" stroke-width="60" filter="url(#soft)"/>
                    <path d="M500 293C600 348 710 430 800 530" fill="none" stroke="#ffdc20" stroke-width="22" filter="url(#glint)"/>
                </g>
                <path d="M357 468C430 550 485 660 478 805" fill="none" stroke="#4a3a10" stroke-width="2"/>
                <g fill="none" stroke="#4f58f2" stroke-width="5">
                    <path d="M325 184C420 230 460 250 500 275 620 340 740 440 820 535 930 665 1030 820 1095 965"/>
                    <path d="M475 805C475 835 495 855 530 878 600 920 780 992 1000 992 1045 992 1105 985 1099 945"/>
                </g>
                <path d="M108 287 175 205C195 170 235 162 260 165 300 168 325 180 345 200 385 235 412 300 413 360 412 390 408 405 400 418L345 488Z" fill="url(#cyl)"/>
                <path d="M325 184C385 235 412 300 413 360 412 390 408 405 400 418" fill="none" stroke="#3a3220" stroke-width="2.500"/>
                <path d="M172 207C195 170 235 162 260 165 290 168 310 175 330 187" fill="none" stroke="#4f58f2" stroke-width="4"/>
                <g stroke="#3a3220" stroke-width="2.500">
                    <ellipse cx="220" cy="393" rx="154" ry="102" transform="rotate(38 220 393)" fill="url(#ring)"/>
                    <ellipse cx="215" cy="403" rx="140" ry="93" transform="rotate(38 215 403)" fill="#8b5400"/>
                    <ellipse cx="213" cy="403" rx="107" ry="71" transform="rotate(38 213 403)" fill="url(#chamferring)"/>
                    <ellipse cx="221" cy="394" rx="91" ry="61" transform="rotate(38 221 394)" fill="url(#boregrad)"/>
                </g>
                <use href="#cbore" x="1302" y="806"/>
                <use href="#cbore" x="476" y="1019"/>
                <use href="#cbore" x="1022" y="1169"/>
            </svg>

            <svg class="triad" viewBox="150 70 200 200">
                <path d="M220 100 290 118 295 178 262 220 195 200 190 147Z" fill="#cfd0d1" stroke="#a4a5a6" stroke-width="2"/>
                <path d="M190 147 254 163 290 118M254 163 262 220M220 100 226 157 295 178M226 157 195 200" fill="none" stroke="#aaa" stroke-width="2"/>
                <path d="M197 195 240 142" stroke="#9fc4a0" stroke-width="8"/><path d="M250 128 246 148 232 140Z" fill="#9fc4a0"/>
                <path d="M189 198 184 125" stroke="#0a2a9c" stroke-width="7"/><path d="M182 104 174 128 183 134 192 128Z" fill="#0a2a9c"/>
                <path d="M200 207 280 226" stroke="#d02a2a" stroke-width="7"/><path d="M308 237 272 236 280 219Z" fill="#d02a2a"/>
                <circle cx="189" cy="206" r="12" fill="url(#steel)"/>
                <text x="170" y="106" fill="#1238e0">Z</text>
                <text x="247" y="131" fill="#8fbf90">Y</text>
                <text x="308" y="255" fill="#d43a3a">X</text>
            </svg>
        </section>

        <aside class="navigator">
            <h2><i class="pin"></i>部件导航器</h2>
            <div class="tree">
                <div class="tree-rows">
                    <table>
                        <thead>
                            <tr><th class="name">名称<i class="sort"></i></th><th>最新</th><th class="rest"></th></tr>
                        </thead>
                        <tbody>
                            <tr><td><div class="node"><i class="stem"></i><svg><use href="#clock"/></svg>历史记录模式</div></td><td></td><td></td></tr>
                            <tr><td><div class="node"><button class="expander">+</button><svg><use href="#views"/></svg>模型视图</div></td><td></td><td></td></tr>
                            <tr><td><div class="node"><button class="expander">+</button><i class="tick"></i><svg><use href="#camera"/></svg>摄像机</div></td><td></td><td></td></tr>
                            <tr><td><div class="node"><button class="expander">−</button><svg><use href="#folder"/></svg>模型历史记录</div></td><td></td><td></td></tr>
                            <tr><td><label class="leaf dim"><input type="checkbox" checked><svg><use href="#datum"/></svg>基准坐标系 (0)</label></td><td><i class="tick"></i></td><td></td></tr>
                            <tr><td><label class="leaf"><input type="checkbox" checked><svg><use href="#cube"/></svg>块 (1)</label></td><td><i class="tick"></i></td><td></td></tr>
                            <tr><td><label class="leaf"><input type="checkbox" checked><svg><use href="#sketch"/></svg>草图 (2) "SKETCH_0...</label></td><td><i class="tick"></i></td><td></td></tr>
                            <tr><td><label class="leaf"><input type="checkbox" checked><svg><use href="#sketch"/></svg>草图 (3) "SKETCH_0...</label></td><td><i class="tick"></i></td><td></td></tr>
                            <tr><td><label class="leaf"><input type="checkbox" checked><svg><use href="#extrude"/></svg>拉伸 (4)</label></td><td><i class="tick"></i></td><td></td></tr>
                            <tr><td><label class="leaf"><input type="checkbox" checked><svg><use href="#swept"/></svg>扫掠 (5)</label></td><td><i class="tick"></i></td><td></td></tr>
                            <tr><td><label class="leaf"><input type="checkbox" checked><svg><use href="#unite"/></svg>求和 (6)</label></td><td><i class="tick"></i></td><td></td></tr>
                            <tr><td><label class="leaf"><input type="checkbox" checked><svg><use href="#extrude"/></svg>拉伸 (7)</label></td><td><i class="tick"></i></td><td></td></tr>
                            <tr><td><label class="leaf"><input type="checkbox" checked><svg><use href="#fillet"/></svg>边倒圆 (8)</label></td><td><i class="tick"></i></td><td></td></tr>
                            <tr><td><label class="leaf"><input type="checkbox" checked><svg><use href="#hole"/></svg>沉头孔 (9)</label></td><td><i class="tick"></i></td><td></td></tr>
                            <tr><td><label class="leaf"><input type="checkbox" checked><svg><use href="#t-chamfer"/></svg>倒斜角 (10)</label></td><td><i class="tick"></i></td><td></td></tr>
                            <tr><td><label class="leaf last"><input type="checkbox" checked><svg><use href="#t-chamfer"/></svg>倒斜角 (11)</label></td><td><i class="tick"></i></td><td></td></tr>
                        </tbody>
                    </table>
                </div>
                <div class="scrollbar">
                    <button class="scroll-left"></button>
                    <div class="track"><div class="thumb"></div></div>
                    <button class="scroll-right"></button>
                </div>
            </div>
            <div class="splitter"><i></i></div>
            <div class="sections">
                <button>相依性<svg><use href="#chev"/></svg></button>
                <button>细节<svg><use href="#chev"/></svg></button>
                <button>预览<svg><use href="#chev"/></svg></button>
            </div>
        </aside>

        <nav class="resource-bar">
            <button class="options"><svg><use href="#gear"/></svg></button>
            <button class="tab"><svg><use href="#t-assy"/></svg></button>
            <button class="tab"><svg><use href="#t-constr"/></svg></button>
            <button class="tab active"><svg><use href="#t-part"/></svg></button>
            <button class="tab"><svg><use href="#t-lib"/></svg></button>
            <button class="tab apart"><svg><use href="#t-info"/></svg></button>
            <button class="tab apart"><svg><use href="#t-web"/></svg></button>
            <button class="tab apart"><svg><use href="#clock"/></svg></button>
            <button class="tab"><svg><use href="#t-color"/></svg></button>
            <button class="tab"><svg><use href="#t-screw"/></svg></button>
            <button class="tab"><svg><use href="#t-tools"/></svg></button>
            <button class="tab"><svg><use href="#t-role"/></svg></button>
        </nav>
    </main>

    <div class="bottom-dock">
        <div class="toolbar">
            <i class="grip"></i>
            <button class="tool"><svg><use href="#sketchnew"/></svg></button>
            <button class="finish"><svg><use href="#flag"/></svg>完成草图</button>
            <button class="tool"><svg><use href="#profile"/></svg></button>
            <button class="tool"><svg><use href="#line"/></svg></button>
            <button class="tool"><svg><use href="#arc"/></svg></button>
            <button class="tool"><svg><use href="#circle"/></svg></button>
            <button class="tool off"><svg><use href="#corner"/></svg></button>
            <button class="tool off"><svg><use href="#bevel"/></svg></button>
            <button class="tool"><svg><use href="#rect"/></svg></button>
            <button class="tool"><svg><use href="#spline"/></svg></button>
            <button class="tool"><svg><use href="#plus"/></svg></button>
            <button class="tool off"><svg><use href="#offset"/></svg></button><button class="drop"></button>
            <i class="sep"></i>
            <button class="tool off"><svg><use href="#qtrim"/></svg></button>
            <button class="tool off"><svg><use href="#qextend"/></svg></button>
            <button class="tool off"><svg><use href="#mkcorner"/></svg></button>
            <i class="sep"></i>
            <button class="tool off"><svg><use href="#dim"/></svg></button><button class="drop"></button>
            <i class="sep"></i>
            <button class="tool off"><svg><use href="#perp"/></svg></button>
            <button class="tool off"><svg><use href="#sym"/></svg></button>
            <button class="tool off"><svg><use href="#auto"/></svg></button><button class="drop"></button>
            <i class="sep"></i>
            <button class="tool off"><svg><use href="#swap"/></svg></button>
            <button class="tool off"><svg><use href="#brushes"/></svg></button>
            <button class="tool off"><svg><use href="#stamp"/></svg></button>
            <button class="more"></button>
        </div>
    </div>

    <footer class="statusbar">
        <div class="cue"></div>
        <div class="status"></div>
        <div class="blank"></div>
        <div class="modes">
            <svg class="icon16"><use href="#flag"/></svg>
            <svg class="icon16"><use href="#fullscreen"/></svg>
        </div>
        <div class="end"></div>
    </footer>
    <div class="taskbar">
        <div class="task"></div>
        <span class="time">21:41</span>
    </div>
</body>
</html>
```

FILE: styles.css
```css
* {
    box-sizing: border-box;
}

body {
    display: flex;
    flex-direction: column;
    height: 100vh;
    margin: 0;
    overflow: hidden;
    background: #d6d6d6;
    color: #111;
    font-family: "Open Sans", "Noto Sans CJK SC", sans-serif;
    font-size: 12px;
}

button {
    padding: 0;
    border: none;
    background: none;
    color: inherit;
    font: inherit;
    white-space: nowrap;
}

svg {
    display: block;
    flex: none;
}

.library {
    position: absolute;
    width: 0;
    height: 0;
}

.icon16 {
    width: 16px;
    height: 16px;
}

/* title and menu */
.top-strip {
    flex: none;
    height: 3px;
    background: #54575e;
}

.titlebar {
    display: flex;
    flex: none;
    align-items: center;
    gap: 5px;
    height: 23px;
    padding: 0 3px 3px 3px;
    border-bottom: 1px solid #000;
    background: #1c1c1c;
    color: #fff;
}

.window-title {
    flex: 1;
    white-space: pre;
    word-spacing: 0;
}

.brand {
    margin-right: 20px;
    font-size: 14px;
    font-weight: 800;
}

.window-buttons {
    display: flex;
    gap: 4px;
}

.window-buttons button {
    width: 19px;
    height: 18px;
    border: 1px solid #555;
    border-radius: 3px;
    background: linear-gradient(#6d6d6d, #2e2e2e);
}

.window-buttons .close {
    border-color: #f0a090;
    background: linear-gradient(#f08a70, #e03a18 55%, #f06a48);
}

.window-buttons svg,
.child-buttons svg {
    width: 15px;
    height: 15px;
    margin: auto;
}

.menubar {
    display: flex;
    flex: none;
    align-items: center;
    height: 26px;
    padding: 0 5px 2px 0;
    border-top: 1px solid #fff;
    border-bottom: 1px solid #b4b4b4;
    background: linear-gradient(#e8e8e8, #e0e0e0);
}

.menubar > .grip {
    height: 20px;
}

.menubar > button {
    margin-left: 12px;
}

.menubar > .icon16 + button {
    margin-left: 7px;
}

.menubar > .wide {
    margin-right: 8px;
}

.child-buttons {
    display: flex;
    gap: 2px;
    margin-left: auto;
    color: #444;
}

.child-buttons button {
    width: 17px;
    height: 17px;
    border: 1px solid #777;
    border-radius: 4px;
    background: linear-gradient(#fff, #ddd);
}

.child-buttons svg {
    width: 13px;
    height: 13px;
}

/* toolbars */
.toolbars {
    flex: none;
    border-bottom: 1px solid #8a8a8a;
    background: linear-gradient(#e1e1e1, #cacaca);
}

.toolbar-row {
    display: flex;
}

.toolbar {
    display: flex;
    align-items: center;
    height: 34px;
    border-top: 1px solid #eee;
    border-right: 1px solid #b6b6b6;
    border-bottom: 1px solid #b6b6b6;
}

.grip {
    flex: none;
    width: 3px;
    height: 26px;
    margin: 0 0 0 4px;
    background: repeating-linear-gradient(#f4f4f4 0 2px, #a0a0a0 2px 4px, transparent 4px 5px);
}

.tool {
    flex: none;
    width: 31px;
    height: 30px;
}

.tool svg,
.start svg,
.finish svg {
    width: 24px;
    height: 24px;
    margin: auto;
}

.off svg {
    opacity: .5;
}

.drop,
.more {
    flex: none;
    width: 12px;
    height: 30px;
}

.drop::after,
.more::after {
    content: "";
    display: block;
    width: 0;
    margin: auto;
    border: 3px solid transparent;
    border-top: 3px solid #111;
    border-bottom: none;
}

.more {
    width: 13px;
    padding-top: 14px;
}

.sep {
    flex: none;
    width: 2px;
    height: 32px;
    margin: 0 2px;
    border-left: 1px solid #b2b2b2;
    border-right: 1px solid #f2f2f2;
}

.start,
.finish {
    display: flex;
    align-items: center;
    gap: 4px;
    padding-left: 4px;
}

.finish {
    padding: 0 3px;
    color: #8a8a8a;
}

.search {
    display: flex;
    align-items: center;
    width: 142px;
    height: 23px;
    margin: 0 3px;
    padding-right: 3px;
    border: 1px solid #a0a0a0;
    background: #fff;
}

.search input {
    flex: 1;
    min-width: 0;
    padding: 0 3px;
    border: none;
    outline: none;
    background: none;
    font: inherit;
}

.search input::placeholder {
    color: #999;
}

.search svg {
    width: 18px;
    height: 18px;
}

/* selection bar */
.selection-bar {
    position: relative;
    display: flex;
    flex: none;
    align-items: center;
    height: 30px;
    padding-left: 5px;
    border-bottom: 1px solid #bbb;
    background: linear-gradient(#b4b4b4, #d0d0d0 35%, #dadada);
}

.selection-bar .sep {
    height: 26px;
}

.combo {
    position: relative;
    width: 147px;
    margin-right: 8px;
}

.combo + .combo {
    width: 155px;
    margin-right: 4px;
}

.combo select {
    display: block;
    width: 100%;
    height: 19px;
    padding: 0 0 0 2px;
    border: 1px solid #777;
    border-radius: 3px;
    appearance: none;
    background: linear-gradient(#e2f0ff, #4f9fe8 60%, #8fd0ff) right / 16px 100% no-repeat #fff;
    color: #000;
    font: inherit;
    line-height: 17px;
}

.combo::after {
    content: "";
    position: absolute;
    top: 7px;
    right: 3px;
    border: 5px solid transparent;
    border-top: 6px solid #111;
    border-bottom: none;
    pointer-events: none;
}

.snap {
    flex: none;
    width: 22px;
    height: 22px;
    margin-right: 1px;
    border: 1px solid transparent;
    border-radius: 3px;
}

.selection-bar .drop {
    width: 11px;
}

.snap.on {
    border-color: #666;
    background: #fff;
}

.snap svg {
    width: 16px;
    height: 16px;
    margin: auto;
}

/* level meter hangs over the window edge */
.level {
    position: absolute;
    z-index: 2;
    top: -6px;
    right: 2px;
    width: 9px;
    height: 56px;
    border: 1px solid #ddd;
    border-radius: 5px;
    background: repeating-linear-gradient(#43c46c 0 2px, #333 2px 3px) bottom / 100% 15px no-repeat #4c4c4c;
}

/* work area */
.workspace {
    display: flex;
    flex: 1;
    min-height: 0;
}

.graphics {
    position: relative;
    flex: 1;
    background: linear-gradient(#b4b5b7, #d4d5d7 42%, #e6e8ea 75%);
}

.model {
    position: absolute;
    top: 155px;
    left: 660px;
    width: 520px;
    height: 480px;
}

.triad {
    position: absolute;
    bottom: 44px;
    left: 50px;
    width: 67px;
    height: 67px;
    font-family: "Liberation Sans", sans-serif;
    font-size: 34px;
}

.navigator {
    display: flex;
    flex: none;
    flex-direction: column;
    width: 322px;
    padding: 0 7px 6px 9px;
    border: 1px solid #fff;
    border-top-color: #777;
    border-bottom-color: #888;
    border-right: 2px solid #555;
    background: #ebebeb;
}

.navigator h2 {
    display: flex;
    align-items: center;
    gap: 12px;
    height: 30px;
    margin: 0;
    padding: 0 0 2px 4px;
    font-size: 13px;
}

.pin {
    width: 13px;
    height: 12px;
    border: 1px solid #111;
    border-top-width: 2px;
}

.tree {
    display: flex;
    flex: 1;
    flex-direction: column;
    min-height: 0;
    border: 1px solid #666;
    background: #fff;
    font-family: "Noto Sans", "Noto Sans CJK SC", sans-serif;
}

.tree-rows {
    flex: 1;
    min-height: 0;
    margin-left: 1px;
    overflow: hidden;
    background:
        linear-gradient(#e2e2e2, #e2e2e2) 199px 0 / 1px 100% no-repeat,
        linear-gradient(#e2e2e2, #e2e2e2) 299px 0 / 1px 100% no-repeat,
        repeating-linear-gradient(#f6f6f6 0 19px, #e4e4e4 19px 20px, #fff 20px 39px, #e4e4e4 39px 40px);
}

.tree table {
    width: 100%;
    border-collapse: separate;
    border-spacing: 0;
    table-layout: fixed;
}

.tree th {
    height: 20px;
    padding: 1px 6px 0;
    border-right: 1px solid #aaa;
    border-bottom: 1px solid #999;
    background: linear-gradient(#f6f6f6 40%, #dcdfe1);
    font-weight: normal;
    line-height: 18px;
    text-align: left;
    width: 100px;
}

.tree th.name {
    width: 200px;
}

.tree th.rest {
    width: auto;
    padding: 0;
}

.sort {
    display: inline-block;
    margin: 0 0 3px 16px;
    border: 5px solid transparent;
    border-top: none;
    border-bottom: 6px solid #111;
}

.tree td {
    height: 20px;
    padding: 0;
    line-height: 18px;
}

.tree td > .tick {
    margin-left: 6px;
}

.node,
.leaf {
    display: flex;
    align-items: center;
    gap: 3px;
    height: 20px;
    white-space: nowrap;
    color: #222;
}

.node {
    padding-left: 4px;
}

.node svg,
.leaf svg {
    width: 16px;
    height: 16px;
}

.expander {
    width: 9px;
    height: 9px;
    margin-right: 3px;
    border: 1px solid #888;
    border-radius: 2px;
    background: #fff;
    line-height: 7px;
    font-size: 10px;
}

.stem {
    width: 8px;
    height: 10px;
    margin: 10px 0 0 4px;
    border-top: 1px dotted #888;
    border-left: 1px dotted #888;
}

.leaf {
    margin-left: 29px;
    border-left: 1px dotted #888;
}

.leaf::before {
    content: "";
    width: 7px;
    border-top: 1px dotted #888;
}

.leaf.dim {
    color: #999;
}

.leaf.last {
    border-left-color: transparent;
    font-size: 13px;
    font-weight: bold;
}

.leaf input {
    display: grid;
    width: 12px;
    height: 12px;
    margin: 0 -1px 0 0;
    border: 1px solid #111;
    appearance: none;
    background: #fff;
}

.tick,
.leaf input:checked::after {
    content: "";
    display: block;
    width: 12px;
    height: 11px;
    background: #12b52a;
    clip-path: polygon(0 55%, 16% 42%, 36% 62%, 80% 6%, 100% 0, 42% 100%, 32% 100%);
}

.leaf input:checked::after {
    width: 10px;
    height: 10px;
}

.scrollbar {
    display: flex;
    flex: none;
    align-items: center;
    height: 17px;
    background: #f0f0f0;
}

.scrollbar button {
    display: grid;
    place-items: center;
    width: 17px;
    height: 17px;
}

.scrollbar button::after {
    content: "";
    width: 6px;
    height: 6px;
    border: solid #444;
    border-width: 2px 0 0 2px;
    transform: rotate(-45deg);
}

.scrollbar .scroll-right::after {
    transform: rotate(135deg);
}

.track {
    flex: 1;
}

.thumb {
    width: 75%;
    height: 15px;
    background: #cdcdcd;
}

.splitter {
    display: flex;
    align-items: center;
    gap: 4px;
    height: 12px;
}

.splitter::before,
.splitter::after {
    content: "";
    flex: 1;
    border-top: 1px solid #bbb;
}

.splitter i {
    width: 53px;
    height: 6px;
    border: 1px solid #fff;
    border-right-color: #888;
    border-bottom-color: #888;
    background: #d4d4d4;
}

.sections {
    border: 1px solid #888;
    border-top-color: #fff;
    border-bottom: none;
}

.sections button {
    display: flex;
    align-items: center;
    justify-content: space-between;
    width: 100%;
    height: 23px;
    padding-left: 6px;
    border-bottom: 1px solid #999;
    background: linear-gradient(#fafafa, #f0f1f2 50%, #dcdddf 51%, #d4d6d8);
    font-size: 13px;
    font-weight: bold;
}

.sections svg {
    width: 23px;
    height: 22px;
    padding: 3px;
    border-left: 1px solid #aaa;
}

/* resource bar */
.resource-bar {
    display: flex;
    flex: none;
    flex-direction: column;
    align-items: flex-start;
    gap: 3px;
    width: 31px;
    background: linear-gradient(90deg, #8c8c8c, #b0b0b0 6px);
}

.options {
    width: 24px;
    height: 12px;
    margin: 8px 0 22px 4px;
}

.options svg {
    width: 14px;
    height: 14px;
    margin: 0 auto;
}

.tab {
    width: 27px;
    height: 39px;
    border: 1px solid #777;
    border-left: none;
    border-radius: 0 3px 3px 0;
    background: linear-gradient(#dedede, #cfcfcf);
}

.tab.active {
    width: 28px;
    height: 43px;
    margin: -2px 0 -1px;
    background: #ebebeb;
}

.tab.apart {
    margin-top: 12px;
}

.tab svg {
    width: 22px;
    height: 24px;
    margin: auto;
}

/* sketch toolbar, status line and the top of the desktop taskbar */
.bottom-dock {
    flex: none;
    padding-left: 350px;
    background: linear-gradient(#e4e4e4, #cacaca);
}

.bottom-dock .toolbar {
    width: max-content;
    border-left: 1px solid #eee;
}

.statusbar {
    display: flex;
    flex: none;
    height: 22px;
    border-top: 1px solid #f4f4f4;
    border-bottom: 1px solid #909498;
    background: #d8d8d8;
}

.statusbar > div {
    border-left: 1px solid #f0f0f0;
    box-shadow: -1px 0 #b6b6b6;
}

.statusbar .cue,
.statusbar .status {
    flex: 1;
}

.statusbar .blank {
    width: 20px;
}

.modes {
    display: flex;
    align-items: center;
    gap: 5px;
    width: 76px;
    padding-left: 2px;
}

.statusbar .end {
    width: 18px;
}

.taskbar {
    display: flex;
    flex: none;
    justify-content: space-between;
    height: 8px;
    overflow: hidden;
    padding: 0 75px 0 356px;
    background: linear-gradient(90deg, #dae2ec, #dde1ea 40%, #e2e0e4 60%, #dfe4ee);
}

.task {
    width: 160px;
    background: #f2f4f8;
}

.time {
    padding-top: 4px;
    line-height: 12px;
}
```
